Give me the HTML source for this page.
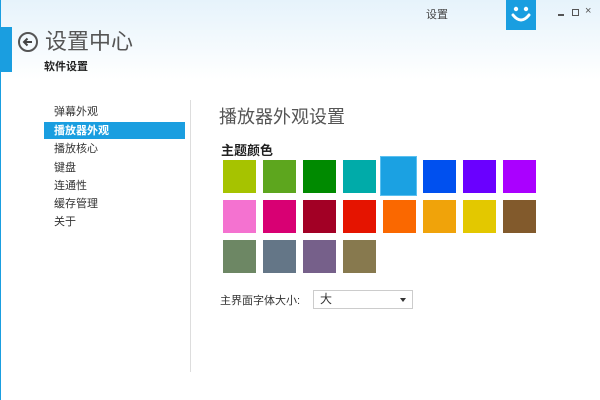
<!DOCTYPE html>
<html><head><meta charset="utf-8"><style>
*{margin:0;padding:0;box-sizing:border-box}
body{width:600px;height:400px;overflow:hidden;position:relative;background:#fff;font-family:"Liberation Sans","Noto Sans CJK SC",sans-serif;color:#333}
.top{position:absolute;left:0;top:0;width:600px;height:80px;background:linear-gradient(#e6f3fb,#fff)}
.bl{position:absolute;left:0;top:0;width:1px;height:400px;background:#1a9ee0}
.abs{position:absolute}
.sw{position:absolute;width:33px;height:33px}
.side div{position:absolute;left:54px;font-size:11px;color:#333;line-height:16px}
</style></head><body>
<div class="top"></div>
<div class="bl"></div>
<div class="abs" style="left:0;top:27px;width:12px;height:45px;background:#1a9ee0"></div>
<div class="abs" style="left:18px;top:32px;width:20px;height:20px;border:2px solid #555;border-radius:50%"></div>
<svg class="abs" style="left:18px;top:32px" width="20" height="20"><path d="M14 10H6M9.5 6.5L6 10l3.5 3.5" stroke="#444" stroke-width="2" fill="none"/></svg>
<div class="abs" style="left:45px;top:29px;font-size:22px;color:#555;line-height:26px">设置中心</div>
<div class="abs" style="left:44px;top:58px;font-size:11px;font-weight:bold;color:#222">软件设置</div>
<div class="abs" style="left:426px;top:6px;font-size:11px;color:#444">设置</div>
<div class="abs" style="left:506px;top:0;width:30px;height:30px;background:#1a9ee0"></div>
<svg class="abs" style="left:506px;top:0" width="30" height="30"><circle cx="10" cy="9" r="2.2" fill="#fff"/><circle cx="20" cy="9" r="2.2" fill="#fff"/><path d="M7 15q8 10 16 0" stroke="#fff" stroke-width="3" fill="none" stroke-linecap="round"/></svg>
<div class="abs" style="left:558px;top:14px;width:6px;height:2px;background:#555"></div>
<div class="abs" style="left:572px;top:9px;width:7px;height:7px;border:1px solid #555"></div>
<div class="abs" style="left:585px;top:5px;font-size:11px;color:#555">×</div>
<div class="abs" style="left:190px;top:100px;width:1px;height:272px;background:#ddd"></div>
<div class="abs" style="left:44px;top:122px;width:141px;height:17px;background:#1a9ee0"></div>
<div class="side">
<div style="top:104px">弹幕外观</div>
<div style="top:123px;color:#fff;font-weight:bold">播放器外观</div>
<div style="top:141px">播放核心</div>
<div style="top:160px">键盘</div>
<div style="top:178px">连通性</div>
<div style="top:196px">缓存管理</div>
<div style="top:214px">关于</div>
</div>
<div class="abs" style="left:219px;top:103px;font-size:18px;color:#555">播放器外观设置</div>
<div class="abs" style="left:221px;top:140px;font-size:13px;font-weight:bold;color:#222">主题颜色</div>
<div class="sw" style="left:223px;top:160px;background:#a6c300"></div>
<div class="sw" style="left:263px;top:160px;background:#5da61e"></div>
<div class="sw" style="left:303px;top:160px;background:#008a00"></div>
<div class="sw" style="left:343px;top:160px;background:#00aba9"></div>
<div class="sw" style="left:380px;top:156px;width:37px;height:40px;background:#1ba1e2;border:1px solid #5bc0f0"></div>
<div class="sw" style="left:423px;top:160px;background:#0050ef"></div>
<div class="sw" style="left:463px;top:160px;background:#6a00ff"></div>
<div class="sw" style="left:503px;top:160px;background:#aa00ff"></div>
<div class="sw" style="left:223px;top:200px;background:#f472d0"></div>
<div class="sw" style="left:263px;top:200px;background:#d80073"></div>
<div class="sw" style="left:303px;top:200px;background:#a20025"></div>
<div class="sw" style="left:343px;top:200px;background:#e51400"></div>
<div class="sw" style="left:383px;top:200px;background:#fa6800"></div>
<div class="sw" style="left:423px;top:200px;background:#f0a30a"></div>
<div class="sw" style="left:463px;top:200px;background:#e3c800"></div>
<div class="sw" style="left:503px;top:200px;background:#825a2c"></div>
<div class="sw" style="left:223px;top:240px;background:#6d8764"></div>
<div class="sw" style="left:263px;top:240px;background:#647687"></div>
<div class="sw" style="left:303px;top:240px;background:#76608a"></div>
<div class="sw" style="left:343px;top:240px;background:#87794e"></div>
<div class="abs" style="left:220px;top:292px;font-size:11px;color:#333">主界面字体大小:</div>
<div class="abs" style="left:313px;top:290px;width:100px;height:19px;border:1px solid #ccc;font-size:12px;padding-left:6px;line-height:17px">大</div>
<div class="abs" style="left:400px;top:298px;width:0;height:0;border-left:3px solid transparent;border-right:3px solid transparent;border-top:4px solid #333"></div>
</body></html>
